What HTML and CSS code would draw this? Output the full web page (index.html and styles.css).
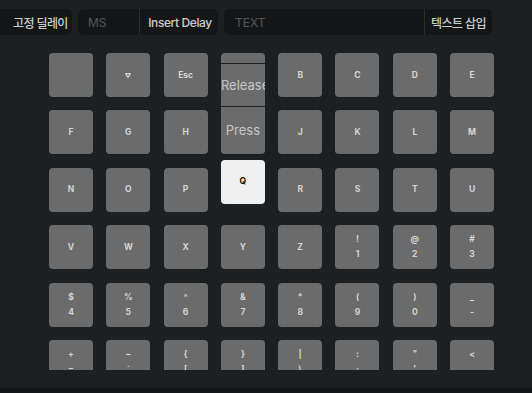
FILE: index.html
```html
<!DOCTYPE html>
<html lang="ko">
<head>
    <meta charset="UTF-8">
    <meta name="viewport" content="width=device-width, initial-scale=1.0">
    <title>Macro Keyboard</title>
    <link rel="stylesheet" href="styles.css">
</head>
<body>
    <div class="toolbar">
        <button class="tool-btn solo">고정 딜레이</button>
        <div class="tool-group">
            <input class="tool-input ms-input" type="text" placeholder="MS">
            <button class="tool-btn delay-btn">Insert Delay</button>
        </div>
        <div class="tool-group">
            <input class="tool-input text-input" type="text" placeholder="TEXT">
            <button class="tool-btn text-btn">텍스트 삽입</button>
        </div>
    </div>

    <div class="board">
        <div class="keys">
            <!-- fila 1 -->
            <div class="key"></div>
            <div class="key">
                <svg width="6" height="5" viewBox="0 0 6 5"><polygon points="0.7,0.7 5.3,0.7 3,4.4" fill="none" stroke="#d6d6d6" stroke-width="1.2"/></svg>
            </div>
            <div class="key">Esc</div>
            <div class="key has-menu">
                <div class="key-menu">
                    <button class="menu-item release">Release</button>
                    <button class="menu-item press">Press</button>
                </div>
            </div>
            <div class="key">B</div>
            <div class="key">C</div>
            <div class="key">D</div>
            <div class="key">E</div>

            <!-- fila 2 (I queda bajo el menú) -->
            <div class="key">F</div>
            <div class="key">G</div>
            <div class="key">H</div>
            <div class="key"></div>
            <div class="key">J</div>
            <div class="key">K</div>
            <div class="key">L</div>
            <div class="key">M</div>

            <!-- fila 3 -->
            <div class="key">N</div>
            <div class="key">O</div>
            <div class="key">P</div>
            <div class="key active">Q</div>
            <div class="key">R</div>
            <div class="key">S</div>
            <div class="key">T</div>
            <div class="key">U</div>

            <!-- fila 4 -->
            <div class="key">V</div>
            <div class="key">W</div>
            <div class="key">X</div>
            <div class="key">Y</div>
            <div class="key">Z</div>
            <div class="key"><span>!</span><span>1</span></div>
            <div class="key"><span>@</span><span>2</span></div>
            <div class="key"><span>#</span><span>3</span></div>

            <!-- fila 5 -->
            <div class="key"><span>$</span><span>4</span></div>
            <div class="key"><span>%</span><span>5</span></div>
            <div class="key"><span>^</span><span>6</span></div>
            <div class="key"><span>&amp;</span><span>7</span></div>
            <div class="key"><span>*</span><span>8</span></div>
            <div class="key"><span>(</span><span>9</span></div>
            <div class="key"><span>)</span><span>0</span></div>
            <div class="key"><span>_</span><span>-</span></div>

            <!-- fila 6 -->
            <div class="key"><span>+</span><span>=</span></div>
            <div class="key"><span>~</span><span>`</span></div>
            <div class="key"><span>{</span><span>[</span></div>
            <div class="key"><span>}</span><span>]</span></div>
            <div class="key"><span>|</span><span>\</span></div>
            <div class="key"><span>:</span><span>;</span></div>
            <div class="key"><span>"</span><span>'</span></div>
            <div class="key"><span>&lt;</span><span>,</span></div>
        </div>
    </div>

    <div class="footer"></div>
</body>
</html>
```

FILE: styles.css
```css
:root {
    --page-bg: #1d2022;
    --panel-bg: #141618;
    --key-bg: #6b6b6b;
    --key-text: #d4d4d4;
    --divider: #2b2e31;
}

body {
    margin: 0;
    width: 532px;
    height: 393px;
    overflow: hidden;
    background-color: var(--page-bg);
    font-family: Inter, "Noto Sans CJK KR", sans-serif;
}

/* barra superior */
.toolbar {
    display: flex;
    gap: 6px;
    margin-left: -6px;
    padding-top: 9px;
    height: 26px;
}

.tool-group {
    display: flex;
    background-color: var(--panel-bg);
    border-radius: 6px;
}

.tool-btn {
    background-color: var(--panel-bg);
    border: none;
    border-radius: 6px;
    color: #cbcbcb;
    font-family: Inter, "Noto Sans CJK KR", sans-serif;
    font-size: 12px;
    font-weight: 500;
    letter-spacing: -0.4px;
    padding: 0;
    height: 26px;
    box-sizing: border-box;
    white-space: nowrap;
    text-align: center;
}

.tool-btn.solo {
    width: 78px;
    padding-left: 19px;
    text-align: left;
    letter-spacing: -0.6px;
}

.tool-group .tool-btn {
    border-left: 1px solid var(--divider);
    border-radius: 0 6px 6px 0;
}

.delay-btn {
    width: 79px;
    padding-left: 2px;
}

.text-btn {
    width: 68px;
    letter-spacing: -0.6px;
}

.tool-input {
    background: transparent;
    border: none;
    outline: none;
    color: #cbcbcb;
    font-family: Inter, sans-serif;
    font-size: 12px;
    padding: 0 0 0 10px;
    height: 26px;
    box-sizing: border-box;
}

.tool-input::placeholder {
    color: #54575a;
}

.ms-input {
    width: 61px;
}

.text-input {
    width: 200px;
    padding-left: 11px;
}

/* teclado */
.board {
    margin-top: 10px;
    height: 325px;
    overflow: hidden;
    padding: 8px 0 0 49px;
    box-sizing: border-box;
}

.keys {
    display: grid;
    grid-template-columns: repeat(8, 44px);
    grid-auto-rows: 44px;
    column-gap: 13.3px;
    row-gap: 13.4px;
}

.key {
    position: relative;
    display: flex;
    flex-direction: column;
    align-items: center;
    justify-content: center;
    background-color: var(--key-bg);
    border-radius: 4px;
    color: var(--key-text);
    font-size: 8.5px;
    font-weight: 700;
    line-height: 15px;
}

.key.active {
    background-color: #f0f0f0;
    color: #111;
    transform: translateY(-8px);
}

.key-menu {
    position: absolute;
    top: 10px;
    left: 0;
    width: 44px;
    z-index: 10;
    display: flex;
    flex-direction: column;
    background-color: var(--key-bg);
    border-top: 1px solid var(--page-bg);
    border-radius: 0 0 4px 4px;
}

.menu-item {
    background: transparent;
    border: none;
    padding: 0;
    margin: 0;
    width: 44px;
    overflow: hidden;
    text-align: center;
    white-space: nowrap;
    color: #c6c6c6;
    font-family: Inter, sans-serif;
    font-size: 13px;
    font-weight: 400;
}

.menu-item.release {
    height: 43px;
    border-bottom: 1px solid var(--page-bg);
}

.menu-item.press {
    height: 46px;
}

.footer {
    margin-top: 18px;
    height: 10px;
    background-color: var(--panel-bg);
}
```
